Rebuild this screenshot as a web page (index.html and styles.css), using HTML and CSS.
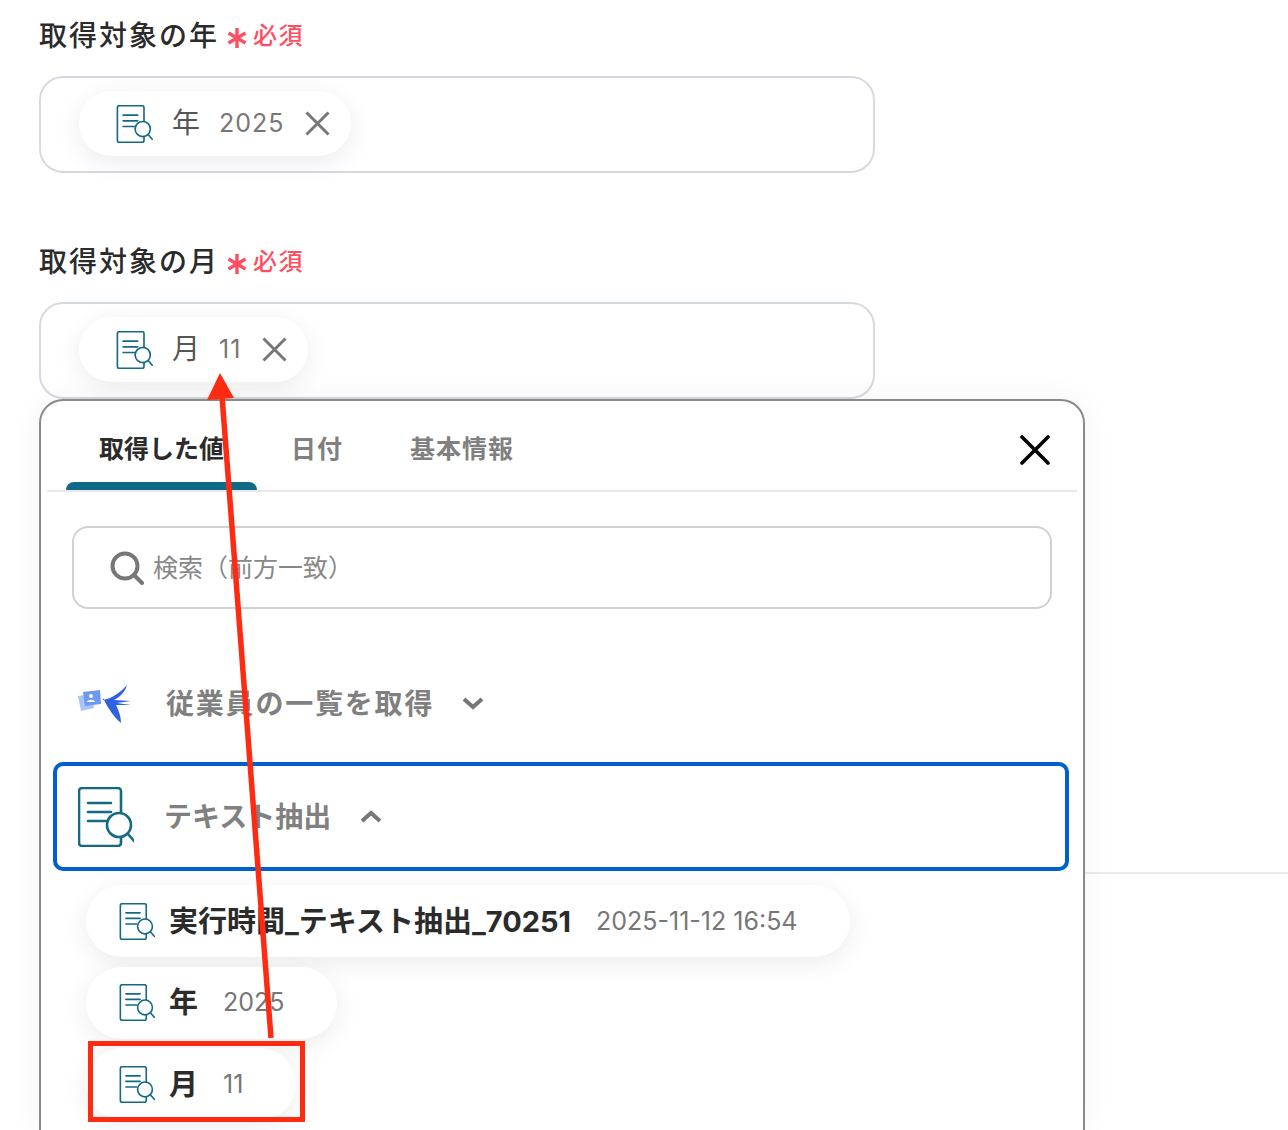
FILE: index.html
```html
<!DOCTYPE html>
<html lang="ja">
<head>
  <meta charset="UTF-8" />
  <title>取得対象の年月</title>
  <link rel="stylesheet" href="styles.css">
</head>
<body>

  <svg class="defs" width="0" height="0">
    <symbol id="doc-icon" viewBox="0 0 56 60">
      <g fill="none" stroke="#136a82" stroke-width="2.6" stroke-linecap="round" stroke-linejoin="round">
        <path d="M43 25V4a3 3 0 0 0-3-3H4a3 3 0 0 0-3 3v52a3 3 0 0 0 3 3h36a3 3 0 0 0 3-3v-6" />
        <path d="M10 16h23M10 25h23M10 34h18" />
        <circle cx="41" cy="38" r="12" />
        <path d="M50 47l6 7" />
      </g>
    </symbol>
    <symbol id="star-icon" viewBox="0 0 20 20">
      <path d="M10 0v20M1.5 5l17 10M18.5 5l-17 10" fill="none" stroke="#ff4d61" stroke-width="3.4" />
    </symbol>
  </svg>

  <div class="page">
    <section class="field first">
      <div class="field-label">取得対象の年<svg class="star"><use href="#star-icon" /></svg><span class="req">必須</span></div>
      <div class="field-box">
        <div class="tag">
          <svg class="tag-icon"><use href="#doc-icon" /></svg>
          <span class="tag-name">年</span>
          <span class="tag-value">2025</span>
          <svg class="tag-x" viewBox="0 0 25 25"><path d="M1.5 1.5l22 22M23.5 1.5l-22 22" /></svg>
        </div>
      </div>
    </section>

    <section class="field second">
      <div class="field-label">取得対象の月<svg class="star"><use href="#star-icon" /></svg><span class="req">必須</span></div>
      <div class="field-box">
        <div class="tag">
          <svg class="tag-icon"><use href="#doc-icon" /></svg>
          <span class="tag-name">月</span>
          <span class="tag-value">11</span>
          <svg class="tag-x" viewBox="0 0 25 25"><path d="M1.5 1.5l22 22M23.5 1.5l-22 22" /></svg>
        </div>
      </div>
    </section>

    <div class="page-rule"></div>
  </div>

  <div class="panel">
    <div class="tabs">
      <div class="tab active">取得した値</div>
      <div class="tab">日付</div>
      <div class="tab">基本情報</div>
      <svg class="panel-close" viewBox="0 0 30 30"><path d="M2 2l26 26M28 2L2 28" /></svg>
    </div>

    <div class="search">
      <svg class="search-icon" viewBox="0 0 34 34"><circle cx="15" cy="15" r="12.5" /><path d="M24 24l8 8" /></svg>
      <span class="search-text">検索（前方一致）</span>
    </div>

    <div class="group-row">
      <svg class="bird" viewBox="0 0 56 44">
        <path d="M0 13l13-2 3 14-13 3z" fill="#a9c4f7" />
        <path d="M5 9l17-2 1 14-16 2z" fill="#6d9af0" />
        <circle cx="13" cy="13" r="2" fill="#fff" />
        <path d="M9 19c1-3 7-3 8 0z" fill="#fff" />
        <path d="M25 17c8-1 18-8 24-15-2 7-7 12-13 15l17 1-14 2 14 2-15 0c3 6 5 12 5 18-7-6-12-13-18-25z" fill="#2f62e0" />
      </svg>
      <span class="group-name">従業員の一覧を取得</span>
      <svg class="chev" viewBox="0 0 24 14"><path d="M3 3l9 8 9-8" /></svg>
    </div>

    <div class="group-row selected">
      <svg class="group-icon"><use href="#doc-icon" /></svg>
      <span class="group-name">テキスト抽出</span>
      <svg class="chev" viewBox="0 0 24 14"><path d="M3 11l9-8 9 8" /></svg>
    </div>

    <div class="values">
      <div class="value-chip">
        <svg class="tag-icon small"><use href="#doc-icon" /></svg>
        <span class="value-name">実行時間_テキスト抽出_70251</span>
        <span class="value-text">2025-11-12 16:54</span>
      </div>
      <div class="value-chip">
        <svg class="tag-icon small"><use href="#doc-icon" /></svg>
        <span class="value-name">年</span>
        <span class="value-text">2025</span>
      </div>
      <div class="value-chip">
        <svg class="tag-icon small"><use href="#doc-icon" /></svg>
        <span class="value-name">月</span>
        <span class="value-text">11</span>
      </div>
    </div>
  </div>

  <!-- red annotation drawn over the screenshot -->
  <svg class="marks" viewBox="0 0 1288 1130">
    <path d="M271 1038L222 396" stroke="#ff2a12" stroke-width="5.5" fill="none" />
    <path d="M220 373L234 398 207 400z" fill="#ff2a12" />
    <rect x="90.5" y="1043.5" width="212" height="76" fill="none" stroke="#ff2a12" stroke-width="5" />
  </svg>

</body>
</html>
```

FILE: styles.css
```css
* {
  box-sizing: border-box;
}

html, body {
  margin: 0;
  height: 1130px;
  overflow: hidden;
}

body {
  position: relative;
  background: white;
  color: #2b2b2b;
  font-family: Inter, "Noto Sans CJK JP", sans-serif;
}

.defs {
  position: absolute;
}

.page {
  padding-top: 16px;
}

.field {
  margin-left: 39px;
  width: 836px;
}

.field.second {
  margin-top: 69px;
}

.field-label {
  display: flex;
  align-items: center;
  height: 40px;
  font-size: 28px;
  font-weight: 500;
  letter-spacing: 2px;
  line-height: 40px;
}

.star {
  flex: none;
  margin: 4px 6px 0 8px;
  width: 20px;
  height: 20px;
}

.req {
  margin-bottom: 1px;
  color: #ff4d61;
  font-size: 24px;
  font-weight: 500;
  letter-spacing: 1.5px;
}

.field-box {
  margin-top: 20px;
  height: 97px;
  padding: 13px 38px;
  border: 2px solid #d5d9e0;
  border-radius: 24px;
}

.tag {
  display: inline-flex;
  align-items: center;
  height: 65px;
  padding: 0 21px 0 37px;
  background: white;
  border-radius: 33px;
  box-shadow: 0 6px 26px rgba(0, 0, 0, 0.08);
}

.tag-icon {
  flex: none;
  width: 37px;
  height: 38px;
}

.tag-icon.small {
  width: 36px;
  height: 37px;
}

.tag-name {
  margin: 0 0 5px 19px;
  color: #555;
  font-size: 28px;
}

.tag-value {
  margin: 0 0 1px 19px;
  color: #777;
  font-size: 25px;
  letter-spacing: 1px;
}

.tag-x {
  margin-left: 21px;
  width: 25px;
  height: 25px;
}

.tag-x path {
  fill: none;
  stroke: #777;
  stroke-width: 3;
}

.page-rule {
  position: absolute;
  top: 872px;
  left: 1000px;
  right: 0;
  height: 2px;
  background: #ebebeb;
}

.panel {
  position: absolute;
  top: 399px;
  left: 39px;
  width: 1046px;
  height: 731px;
  background: white;
  border: 2px solid #8a8a8a;
  border-bottom: none;
  border-radius: 24px 24px 0 0;
  box-shadow: 0 0 30px rgba(0, 0, 0, 0.05);
}

.tabs {
  position: relative;
  display: flex;
  margin: 0 6px;
  padding-left: 19px;
  height: 91px;
  border-bottom: 2px solid #e8e8e8;
}

.tab {
  position: relative;
  padding: 30px 33px 0 34px;
  color: #808080;
  font-size: 25px;
  font-weight: 700;
  letter-spacing: 1px;
  line-height: 36px;
}

.tab.active {
  padding-left: 33px;
  color: #2b2b2b;
  letter-spacing: 0;
}

.tab.active::after {
  content: "";
  position: absolute;
  left: 0;
  right: 0;
  bottom: 0;
  height: 8px;
  background: #0f6a85;
  border-radius: 8px 8px 0 0;
}

.panel-close {
  position: absolute;
  top: 34px;
  right: 27px;
  width: 30px;
  height: 30px;
}

.panel-close path {
  fill: none;
  stroke: black;
  stroke-width: 3.6;
  stroke-linecap: round;
}

.search {
  display: flex;
  align-items: center;
  gap: 9px;
  margin: 34px 0 0 31px;
  padding-left: 36px;
  width: 980px;
  height: 83px;
  border: 2px solid #d0d0d0;
  border-radius: 16px;
  color: #888;
  font-size: 25px;
}

.search-icon {
  width: 34px;
  height: 34px;
}

.search-icon circle, .search-icon path {
  fill: none;
  stroke: #777;
  stroke-width: 4;
  stroke-linecap: round;
}

.search-text {
  margin-bottom: 4px;
}

.group-row {
  display: flex;
  align-items: center;
  margin: 41px 0 0 12px;
  padding-left: 25px;
  width: 1016px;
  height: 106px;
}

.group-row.selected {
  margin-top: 6px;
  padding-left: 21px;
  height: 109px;
  border: 4px solid #0060cc;
  border-radius: 10px;
}

.bird {
  flex: none;
  margin-top: 4px;
  width: 56px;
  height: 44px;
}

.group-icon {
  flex: none;
  width: 56px;
  height: 60px;
}

.group-name {
  margin: 0 0 3px 32px;
  color: #808080;
  font-size: 28px;
  font-weight: 700;
  letter-spacing: 1.8px;
}

.selected .group-name {
  margin-left: 30px;
  letter-spacing: 0;
}

.chev {
  margin-left: 27px;
  width: 24px;
  height: 14px;
}

.selected .chev {
  margin-left: 28px;
}

.chev path {
  fill: none;
  stroke: #777;
  stroke-width: 4;
}

.values {
  display: flex;
  flex-direction: column;
  align-items: flex-start;
  gap: 9.5px;
  margin: 14px 0 0 45px;
}

.value-chip {
  display: flex;
  align-items: center;
  height: 72px;
  padding: 0 53px 0 33px;
  background: white;
  border-radius: 36px;
  box-shadow: 0 6px 26px rgba(0, 0, 0, 0.08);
}

.value-name {
  margin: 0 0 5px 14px;
  font-size: 29px;
  font-weight: 700;
}

.value-text {
  margin: 0 0 1px 25px;
  color: #777;
  font-size: 25px;
}

.marks {
  position: absolute;
  top: 0;
  left: 0;
  width: 1288px;
  height: 1130px;
  pointer-events: none;
}
```
